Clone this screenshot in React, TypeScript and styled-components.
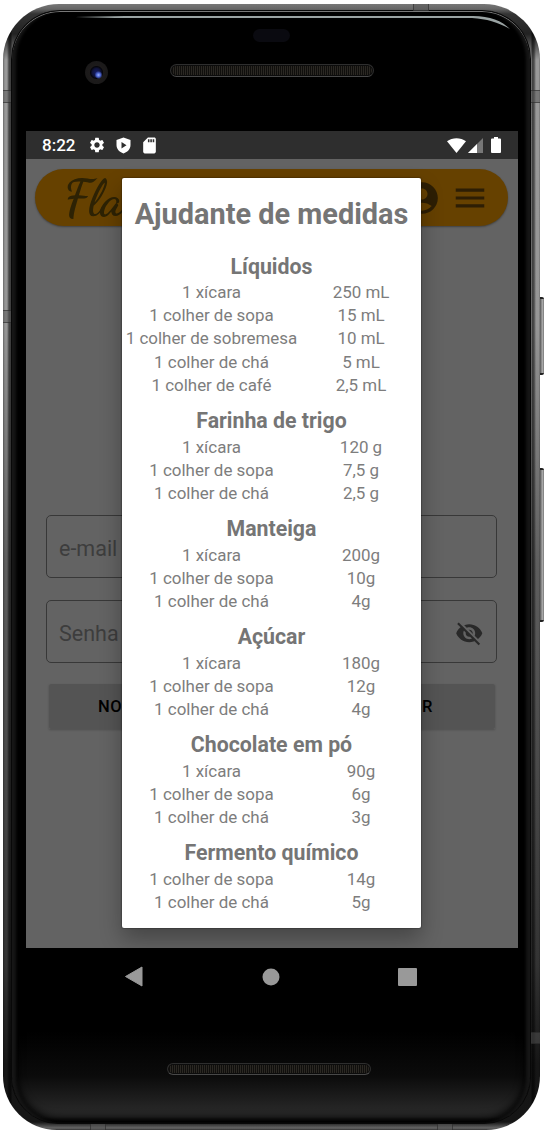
import React from 'react';
import styled, { createGlobalStyle } from 'styled-components';
import { MdAccountCircle, MdMenu, MdSdCard, MdSettings } from 'react-icons/md';

const GlobalStyle = createGlobalStyle`
  * { box-sizing: border-box; }
  body { margin: 0; background: #fff; font-family: Roboto, "Liberation Sans", sans-serif; }
`;

const Stage = styled.div`
  width: 544px;
  height: 1134px;
  padding: 4px 0 0 3px;
  overflow: hidden;
`;

const Phone = styled.div`
  position: relative;
  width: 537px;
  height: 1126px;
  padding: 6px 9px 6px 8px;
  border-radius: 56px 56px 54px 54px;
  background:
    linear-gradient(90deg, rgba(0,0,0,.3) 0, transparent 2px, transparent 4px, rgba(0,0,0,.55) 6px, rgba(0,0,0,.6) 8px, transparent 9px, transparent 528px, rgba(0,0,0,.6) 529px, rgba(0,0,0,.5) 531px, transparent 533px, transparent 536px, rgba(0,0,0,.3) 537px),
    linear-gradient(180deg, #777 0, #666 5px, #333 10px, #222 30px, #999 56px, #969696 320px, #5e5e5e 560px, #4a4a4a 760px, #333 960px, #161616 1060px, #151515 1118px, #666 1124px, #333 1126px);
`;

const Glass = styled.div`
  display: flex;
  flex-direction: column;
  width: 520px;
  height: 1114px;
  padding: 0 12px 0 14px;
  border: 1px solid #080808;
  border-radius: 49px 49px 47px 47px;
  background: linear-gradient(180deg, #000 0, #000 1020px, #0b0b0b 1065px, #2c2c2c 1106px, #050505 1112px);
  box-shadow: inset 0 1px 0 #777, inset 5px 0 3px -1px #161616, inset -5px 0 3px -1px #161616, inset 0 0 8px 5px #000;
`;

const Seam = styled.i<{ $x: number; $y: number; $w: number; $h: number }>`
  position: absolute;
  left: ${p => p.$x}px;
  top: ${p => p.$y}px;
  width: ${p => p.$w}px;
  height: ${p => p.$h}px;
  background: rgba(85, 85, 85, 0.5);
  border: solid rgba(30, 30, 30, 0.5);
  border-width: ${p => (p.$h > p.$w ? '1px 0' : '0 1px')};
`;

const SideButton = styled.i<{ $y: number; $h: number; $w: number }>`
  position: absolute;
  left: 537px;
  top: ${p => p.$y}px;
  width: ${p => p.$w}px;
  height: ${p => p.$h}px;
  border: solid #222;
  border-width: 2px 0;
  border-radius: 0 2px 2px 0;
  background: linear-gradient(90deg, #555, #aaa 60%, #777);
`;

const Shine = styled.svg`
  position: absolute;
  left: 72px;
  top: 10px;
`;

const TopBezel = styled.div`
  position: relative;
  height: 120px;
  flex: none;
`;

const Sensor = styled.i`
  position: absolute;
  left: 227px;
  top: 18px;
  width: 37px;
  height: 13px;
  border-radius: 7px;
  background: #0a0a10;
`;

const Camera = styled.i`
  position: absolute;
  left: 59px;
  top: 50px;
  width: 23px;
  height: 23px;
  border-radius: 50%;
  background:
    radial-gradient(circle at 13.5px 14px, #9db4ff 0, #4b64d0 2px, transparent 4px),
    radial-gradient(circle at 11.5px 11.5px, #171f68 0, #10143c 4px, #06060c 6px, #1d1b1b 7px, #1a1919 12px);
`;

const Speaker = styled.i<{ $x: number; $y: number; $w: number; $h: number }>`
  position: absolute;
  left: ${p => p.$x}px;
  top: ${p => p.$y}px;
  width: ${p => p.$w}px;
  height: ${p => p.$h}px;
  border: 1px solid #2e2e2e;
  border-bottom-color: #484848;
  border-radius: 7px;
  background: repeating-linear-gradient(90deg, #2b2823 0 1px, #100f0d 1px 2px);
  box-shadow: inset 0 0 0 1px #0c0c0c;
`;

const Screen = styled.div`
  position: relative;
  width: 492px;
  height: 817px;
  flex: none;
  overflow: hidden;
  background: #636363;
`;

const StatusBar = styled.div`
  display: flex;
  align-items: center;
  height: 28px;
  padding: 0 17.5px 0 16px;
  background: #2e2e2e;
  color: #fff;
  svg { display: block; flex: none; }
`;

const Clock = styled.span`
  width: 46px;
  padding-top: 1px;
  font-size: 17px;
  font-weight: 500;
  line-height: 27px;
`;

const StatusIcons = styled.div<{ $end?: boolean }>`
  display: flex;
  align-items: center;
  gap: ${p => (p.$end ? 0 : 9.7)}px;
  margin-left: ${p => (p.$end ? 'auto' : '0')};
`;

const AppBar = styled.header`
  display: flex;
  align-items: center;
  width: 473px;
  height: 57px;
  margin: 10px 0 0 9px;
  padding: 0 19.5px 0 29px;
  border-radius: 29px;
  background: #664100;
  box-shadow: 0 1px 2px rgba(0, 0, 0, 0.35);
  color: #2d1e04;
`;

const Wordmark = styled.span`
  flex: 1;
  padding-top: 4px;
  color: #2d2204;
  font-family: "Dancing Script", Lato, sans-serif;
  font-size: 50px;
  font-weight: 700;
  line-height: 57px;
`;

const Form = styled.div`
  display: flex;
  flex-direction: column;
  gap: 22px;
  padding: 289px 21px 0 20px;
`;

const Field = styled.div`
  display: flex;
  align-items: center;
  justify-content: space-between;
  height: 63px;
  padding: 4px 12.5px 0 12px;
  border: 1px solid #383838;
  border-radius: 5px;
  color: #3d3d3d;
  font-size: 21.5px;
`;

const Actions = styled.div`
  display: flex;
  width: 446px;
  margin: -1px 0 0 3px;
  box-shadow: 0 1px 2px rgba(0, 0, 0, 0.2);
`;

const ActionButton = styled.button<{ $end?: boolean }>`
  flex: 1;
  height: 45px;
  padding: ${p => (p.$end ? '0 62px 0 0' : '0 0 0 49px')};
  border: 0;
  border-radius: 2px;
  background: #545454;
  color: #000;
  font: 500 16.5px Roboto, sans-serif;
  letter-spacing: 0.5px;
  text-align: ${p => (p.$end ? 'right' : 'left')};
`;

const Dialog = styled.section`
  position: absolute;
  left: 96px;
  top: 47.4px;
  width: 299px;
  height: 750px;
  border-radius: 2px;
  background: #fff;
  color: #757575;
  text-align: center;
  box-shadow: 0 0 1px 1px rgba(0, 0, 0, 0.2), 0 11px 22px rgba(0, 0, 0, 0.3);
`;

const DialogTitle = styled.h1`
  margin: 0 0 11px;
  padding-top: 17.2px;
  font-size: 28.9px;
  font-weight: 700;
  line-height: 36px;
  white-space: nowrap;
`;

const Group = styled.div`
  padding-top: 10px;
`;

const GroupTitle = styled.h2`
  margin: 0;
  font-size: 21.3px;
  font-weight: 700;
  line-height: 28.6px;
`;

const Measure = styled.div`
  display: grid;
  grid-template-columns: 179px 120px;
  color: #7d7d7d;
  font-size: 16.95px;
  font-weight: 400;
  line-height: 23.15px;
  white-space: nowrap;
`;

const NavBar = styled.nav`
  display: flex;
  align-items: center;
  justify-content: space-between;
  height: 57px;
  padding: 0 101px 0 98px;
  flex: none;
`;

type MeasureGroup = { title: string; rows: [string, string][] };

const GROUPS: MeasureGroup[] = [
  {
    title: 'Líquidos',
    rows: [
      ['1 xícara', '250 mL'],
      ['1 colher de sopa', '15 mL'],
      ['1 colher de sobremesa', '10 mL'],
      ['1 colher de chá', '5 mL'],
      ['1 colher de café', '2,5 mL'],
    ],
  },
  { title: 'Farinha de trigo', rows: [['1 xícara', '120 g'], ['1 colher de sopa', '7,5 g'], ['1 colher de chá', '2,5 g']] },
  { title: 'Manteiga', rows: [['1 xícara', '200g'], ['1 colher de sopa', '10g'], ['1 colher de chá', '4g']] },
  { title: 'Açúcar', rows: [['1 xícara', '180g'], ['1 colher de sopa', '12g'], ['1 colher de chá', '4g']] },
  { title: 'Chocolate em pó', rows: [['1 xícara', '90g'], ['1 colher de sopa', '6g'], ['1 colher de chá', '3g']] },
  { title: 'Fermento químico', rows: [['1 colher de sopa', '14g'], ['1 colher de chá', '5g']] },
];

const ShieldIcon = () => (
  <svg width="15" height="17" viewBox="0 0 15 17">
    <path fill="#fff" fillRule="evenodd" d="M7.5.5 14.5 3v5c0 4-2.800 7-7 8.500C3.300 15 .5 12 .5 8V3zM5.500 5v6.500l5-3.250z" />
  </svg>
);

const WifiIcon = () => (
  <svg width="19" height="15" viewBox="0 0 19 15">
    <path fill="#fff" d="M9.500 15 0 3.200C5.500-.9 13.500-.9 19 3.200z" />
  </svg>
);

const SignalIcon = () => (
  <svg width="15" height="15" viewBox="0 0 15 15" style={{ marginLeft: 2 }}>
    <path fill="#777" d="M15 0v15H0z" />
    <path fill="#fff" d="M9 6v9H0z" />
  </svg>
);

const BatteryIcon = () => (
  <svg width="10" height="16" viewBox="0 0 10 16" style={{ marginLeft: 8 }}>
    <path fill="#fff" d="M3 0h4v1.500h2q1 0 1 1V15q0 1-1 1H1q-1 0-1-1V2.500q0-1 1-1h2z" />
  </svg>
);

const EyeOffIcon = () => (
  <svg width="28.500" height="28.500" viewBox="0 0 24 24">
    <mask id="strike">
      <path fill="#fff" d="M0 0h24v24H0z" />
      <path stroke="#000" strokeWidth="2" d="M3 1.900 22 20.900" />
    </mask>
    <path
      mask="url(#strike)"
      fill="#292929"
      d="M12 4.500C7 4.500 2.730 7.610 1 12c1.730 4.390 6 7.500 11 7.500s9.270-3.110 11-7.500c-1.730-4.390-6-7.500-11-7.500zM12 17c-2.760 0-5-2.240-5-5s2.240-5 5-5 5 2.240 5 5-2.240 5-5 5zm0-8c-1.660 0-3 1.340-3 3s1.340 3 3 3 3-1.340 3-3-1.340-3-3-3z"
    />
    <path stroke="#292929" strokeWidth="1.800" d="m2.500 3.500 18 18" />
  </svg>
);

export default function App() {
  return (
    <Stage>
      <GlobalStyle />
      <Phone>
        <Glass>
          <TopBezel>
            <Sensor />
            <Camera />
            <Speaker $x={144} $y={53} $w={204} $h={13} />
          </TopBezel>
          <Screen>
            <StatusBar>
              <Clock>8:22</Clock>
              <StatusIcons>
                <MdSettings size={18} />
                <ShieldIcon />
                <MdSdCard size={19} />
              </StatusIcons>
              <StatusIcons $end>
                <WifiIcon />
                <SignalIcon />
                <BatteryIcon />
              </StatusIcons>
            </StatusBar>
            <AppBar>
              <Wordmark>Fla</Wordmark>
              <MdAccountCircle size={38} style={{ marginRight: 9.5 }} />
              <MdMenu size={38} />
            </AppBar>
            <Form>
              <Field>e-mail</Field>
              <Field>
                Senha
                <EyeOffIcon />
              </Field>
              <Actions>
                <ActionButton>NO</ActionButton>
                <ActionButton $end>R</ActionButton>
              </Actions>
            </Form>
            <Dialog>
              <DialogTitle>Ajudante de medidas</DialogTitle>
              {GROUPS.map(group => (
                <Group key={group.title}>
                  <GroupTitle>{group.title}</GroupTitle>
                  {group.rows.map(([name, amount]) => (
                    <Measure key={name}>
                      <span>{name}</span>
                      <span>{amount}</span>
                    </Measure>
                  ))}
                </Group>
              ))}
            </Dialog>
          </Screen>
          <NavBar>
            <svg width="20" height="21" viewBox="0 0 20 21">
              <path fill="#999" stroke="#999" strokeLinejoin="round" d="M1.500 10.500 18 1v19z" />
            </svg>
            <svg width="18" height="18" viewBox="0 0 18 18">
              <circle cx="9" cy="9" r="8.500" fill="#999" />
            </svg>
            <svg width="19" height="18" viewBox="0 0 19 18">
              <rect width="19" height="18" rx="1" fill="#999" />
            </svg>
          </NavBar>
          <TopBezel>
            <Speaker $x={141} $y={58} $w={204} $h={12} />
          </TopBezel>
        </Glass>
        <Shine width="442" height="18" viewBox="0 0 442 18">
          <path fill="#9aa3a3" d="M0 3 50 2H398c17 0 29 5 37 13-13-7-23-10-38-11H40z" />
        </Shine>
        <Seam $x={0} $y={86} $w={8} $h={13} />
        <Seam $x={0} $y={306} $w={8} $h={13} />
        <Seam $x={528} $y={86} $w={9} $h={13} />
        <Seam $x={410} $y={0} $w={16} $h={7} />
        <Seam $x={528} $y={1028} $w={9} $h={12} />
        <Seam $x={87} $y={1120} $w={16} $h={6} />
        <Seam $x={434} $y={1120} $w={16} $h={6} />
        <SideButton $y={293} $h={78} $w={4} />
        <SideButton $y={464} $h={154} $w={4} />
      </Phone>
    </Stage>
  );
}
